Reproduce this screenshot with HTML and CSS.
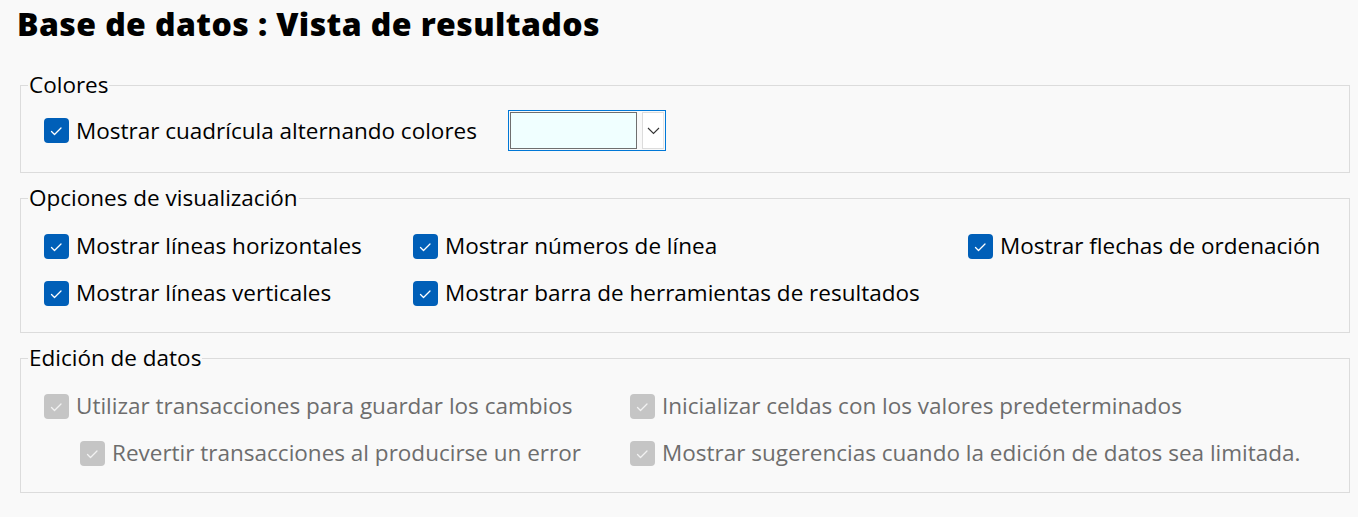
FILE: index.html
```html
<!DOCTYPE html>
<html lang="es">
<head>
<meta charset="utf-8">
<title>Base de datos : Vista de resultados</title>
<link rel="stylesheet" href="styles.css">
</head>
<body>
<div class="page">
  <h1 class="title">Base de datos : Vista de resultados</h1>

  <fieldset class="group group-colors">
    <legend class="legend">Colores</legend>
    <div class="color-row">
      <label class="check">
        <span class="box"><svg viewBox="0 0 25 25"><polyline points="7.5,13.5 10.5,16.5 17,10"/></svg></span>
        <span class="label">Mostrar cuadrícula alternando colores</span>
      </label>
      <div class="combo">
        <span class="swatch"></span>
        <span class="drop"><svg viewBox="0 0 13 8"><polyline points="1,1 6.5,6.5 12,1"/></svg></span>
      </div>
    </div>
  </fieldset>

  <fieldset class="group">
    <legend class="legend">Opciones de visualización</legend>
    <div class="grid grid-view">
      <label class="check">
        <span class="box"><svg viewBox="0 0 25 25"><polyline points="7.5,13.5 10.5,16.5 17,10"/></svg></span>
        <span class="label">Mostrar líneas horizontales</span>
      </label>
      <label class="check">
        <span class="box"><svg viewBox="0 0 25 25"><polyline points="7.5,13.5 10.5,16.5 17,10"/></svg></span>
        <span class="label">Mostrar números de línea</span>
      </label>
      <label class="check">
        <span class="box"><svg viewBox="0 0 25 25"><polyline points="7.5,13.5 10.5,16.5 17,10"/></svg></span>
        <span class="label">Mostrar flechas de ordenación</span>
      </label>
      <label class="check">
        <span class="box"><svg viewBox="0 0 25 25"><polyline points="7.5,13.5 10.5,16.5 17,10"/></svg></span>
        <span class="label">Mostrar líneas verticales</span>
      </label>
      <label class="check">
        <span class="box"><svg viewBox="0 0 25 25"><polyline points="7.5,13.5 10.5,16.5 17,10"/></svg></span>
        <span class="label">Mostrar barra de herramientas de resultados</span>
      </label>
    </div>
  </fieldset>

  <fieldset class="group">
    <legend class="legend">Edición de datos</legend>
    <div class="grid grid-edit">
      <label class="check disabled">
        <span class="box"><svg viewBox="0 0 25 25"><polyline points="7.5,13.5 10.5,16.5 17,10"/></svg></span>
        <span class="label">Utilizar transacciones para guardar los cambios</span>
      </label>
      <label class="check disabled">
        <span class="box"><svg viewBox="0 0 25 25"><polyline points="7.5,13.5 10.5,16.5 17,10"/></svg></span>
        <span class="label">Inicializar celdas con los valores predeterminados</span>
      </label>
      <label class="check disabled indent">
        <span class="box"><svg viewBox="0 0 25 25"><polyline points="7.5,13.5 10.5,16.5 17,10"/></svg></span>
        <span class="label">Revertir transacciones al producirse un error</span>
      </label>
      <label class="check disabled">
        <span class="box"><svg viewBox="0 0 25 25"><polyline points="7.5,13.5 10.5,16.5 17,10"/></svg></span>
        <span class="label">Mostrar sugerencias cuando la edición de datos sea limitada.</span>
      </label>
    </div>
  </fieldset>
</div>
</body>
</html>
```

FILE: styles.css
```css
html, body {
  margin: 0;
  padding: 0;
  background: #f9f9f9;
}

body {
  font-family: "Open Sans", "Noto Sans", "DejaVu Sans", sans-serif;
  color: #000;
  width: 1358px;
  height: 517px;
  overflow: hidden;
}

.page {
  padding: 0 8px 0 20px;
}

.title {
  margin: 0 0 0 -3px;
  padding-top: 4px;
  height: 68px;
  font-size: 32px;
  line-height: 40px;
  font-weight: 800;
  letter-spacing: 0.4px;
}

.group {
  margin: 0 0 12px 0;
  border: 1px solid #dcdcdc;
  padding: 19px 10px 23px 23px;
  min-width: 0;
}

.legend {
  margin-left: -16px;
  padding: 0 1px;
  font-size: 22.5px;
  line-height: 26px;
  color: #000;
}

.group-colors {
  padding-top: 12px;
  padding-bottom: 21px;
}

.color-row {
  display: flex;
  align-items: center;
  height: 41px;
}

.check {
  display: flex;
  align-items: center;
  height: 32px;
  font-size: 22.5px;
  line-height: 32px;
  white-space: nowrap;
}

.box {
  flex: none;
  width: 25px;
  height: 25px;
  border-radius: 4px;
  background: #005fb8;
  margin-right: 7px;
  display: flex;
}

.box svg {
  width: 25px;
  height: 25px;
}

.box polyline {
  fill: none;
  stroke: #fff;
  stroke-width: 1.3;
  stroke-linecap: round;
  stroke-linejoin: round;
}

.disabled {
  color: #6d6d6d;
}

.disabled .box {
  background: #c5c5c5;
}

.disabled .box polyline {
  stroke: #f2f2f2;
}

.combo {
  margin-left: 31px;
  width: 158px;
  height: 41px;
  box-sizing: border-box;
  border: 1px solid #0078d7;
  padding: 1px;
  display: flex;
}

.swatch {
  width: 128px;
  height: 37px;
  box-sizing: border-box;
  border: 1px solid #6f6f6f;
  background: #f0ffff;
}

.drop {
  margin-left: 5px;
  width: 22px;
  height: 37px;
  box-sizing: border-box;
  border: 1px solid #dcdcdc;
  border-right-color: #e6e6e6;
  background: #fff;
  display: flex;
  align-items: center;
  justify-content: center;
}

.drop svg {
  width: 13px;
  height: 8px;
}

.drop polyline {
  fill: none;
  stroke: #333;
  stroke-width: 1.1;
}

.grid {
  display: grid;
  row-gap: 15px;
}

.grid-view {
  grid-template-columns: 369px 555px auto;
}

.grid-edit {
  grid-template-columns: 586px auto;
}

.indent {
  padding-left: 36px;
}
```
